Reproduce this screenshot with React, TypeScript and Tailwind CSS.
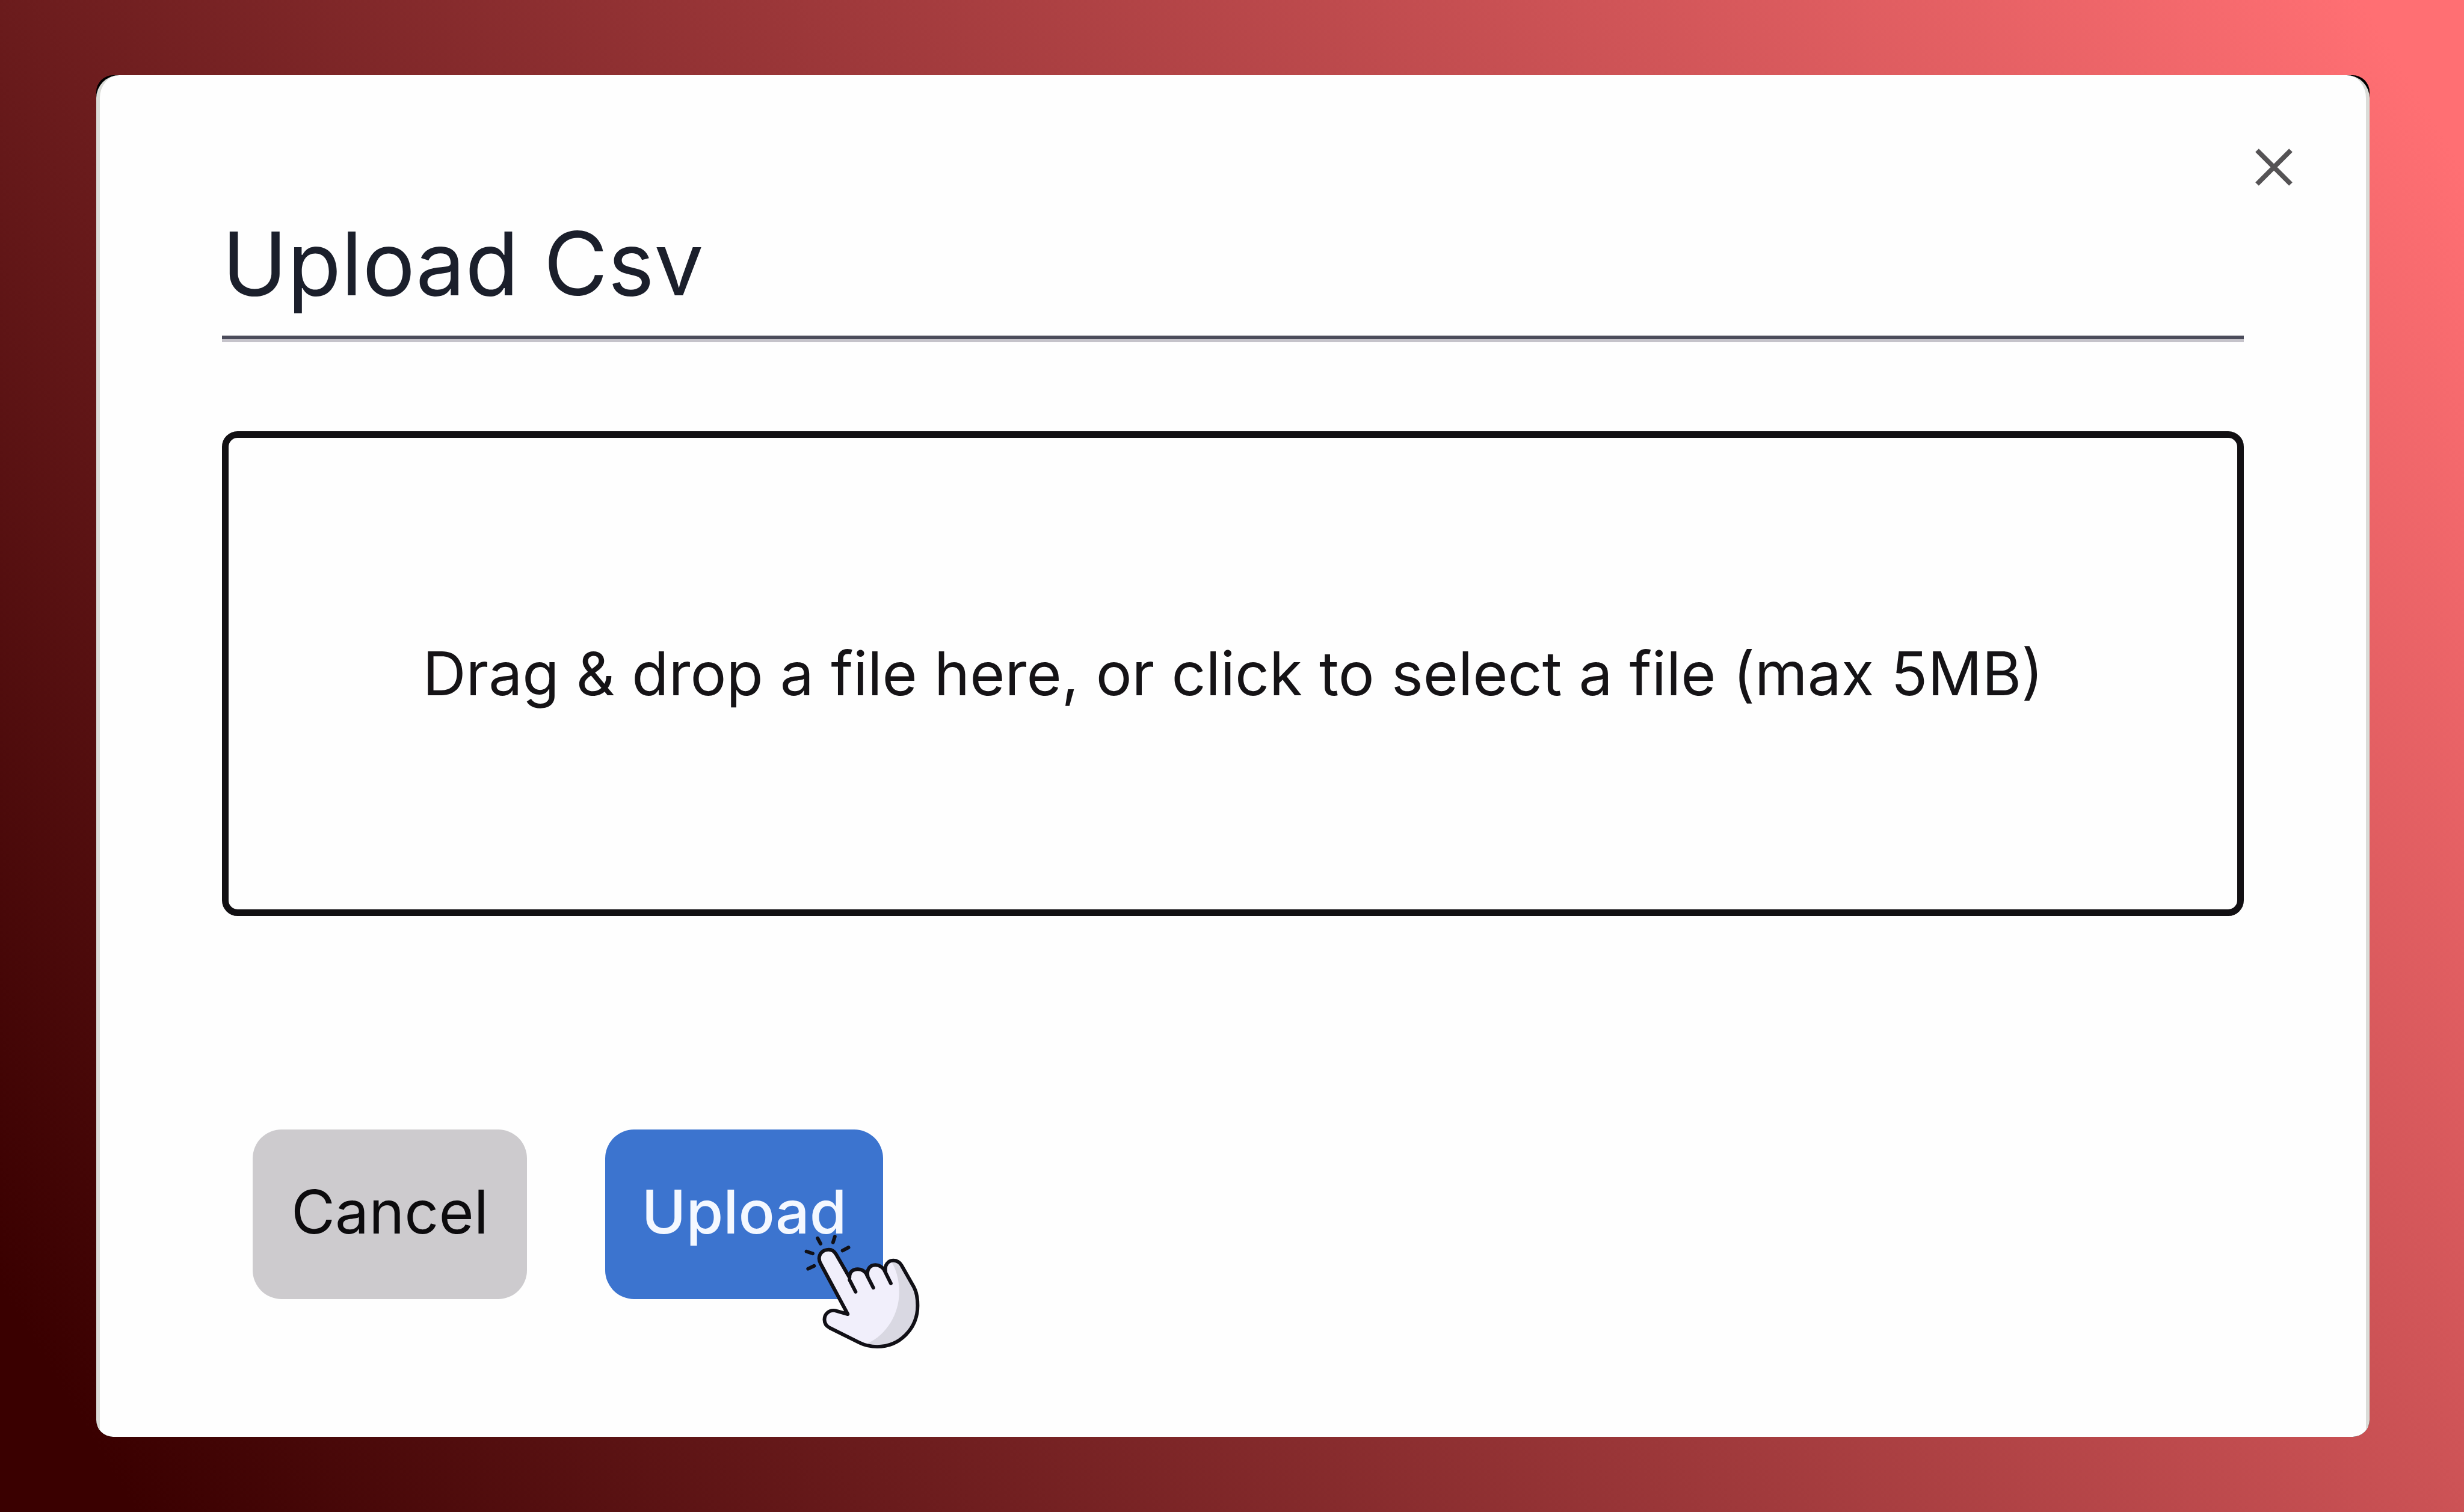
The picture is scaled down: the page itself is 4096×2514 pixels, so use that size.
import React from "react";

const RAYS = [
  "M215 161L235 198",
  "M331 150L319 189",
  "M423 223L383 244",
  "M140 250L182 264",
  "M192 347L151 367",
];

const OUTLINE =
  "M418 672L234 330C214 290 232 256 262 243C298 230 324 242 340 270L430 426C428 386 454 369 486 369C520 369 538 388 552 412C544 374 566 341 604 341C638 341 656 360 672 384C664 344 688 311 724 311C752 311 768 324 780 344L864 492C884 530 888 570 888 614C888 770 766 891 616 891C570 891 532 882 496 864L296 764C274 752 261 734 261 708C261 672 290 647 322 647C330 647 338 649 344 651Z";

function HandPointer() {
  return (
    <svg viewBox="0 0 1020 1020" className="block size-full" aria-hidden="true">
      <path d={OUTLINE} fill="#f1effb" />
      <path
        d="M708 314C752 306 770 324 780 344L864 492C884 530 888 570 888 614C888 770 766 891 616 891C592 891 570 888 552 868C680 810 764 670 764 524C764 440 744 370 708 314Z"
        fill="#d9d8e2"
      />
      <g fill="none" stroke="#111016" strokeWidth="24" strokeLinecap="round" strokeLinejoin="round">
        <path d={OUTLINE} />
        <path d="M430 442L471 522" />
        <path d="M546 408L590 494" />
        <path d="M664 376L708 465" />
        {RAYS.map((d) => (
          <path key={d} d={d} />
        ))}
      </g>
    </svg>
  );
}

export default function App() {
  return (
    <main className="min-h-screen bg-[linear-gradient(59deg,#3a0000_4%,#ff6f73_97%)] pt-[125px] pr-[157px] pb-[125px] pl-[160px] font-['Inter',sans-serif]">
      <section
        role="dialog"
        aria-labelledby="title"
        className="relative overflow-hidden rounded-[28px] bg-black"
      >
        <div className="min-h-[2264px] rounded-t-[38px] border-x-[6px] border-[#dbdcd8] bg-[#fefefe] px-[203px] pt-[220px]">
          <button
            type="button"
            aria-label="Close"
            className="absolute top-[122px] right-[128px] flex size-[62px] items-center justify-center"
          >
            <svg viewBox="0 0 62 62" className="size-full" fill="none" stroke="#555355" strokeWidth="8">
              <path d="M3 3L59 59M59 3L3 59" />
            </svg>
          </button>
          <h1
            id="title"
            className="border-b-[6px] border-[#4b4c5b] pb-[27px] text-[146px] leading-[186px] text-[#1b1f2b] shadow-[0_5px_0_#c5c3ca]"
          >
            Upload Csv
          </h1>
          <button
            type="button"
            className="mt-[153px] flex h-[806px] w-full items-center justify-center rounded-[26px] border-[11px] border-[#121013] text-[100px] leading-[128px] text-[#151316]"
          >
            Drag &amp; drop a file here, or click to select a file (max 5MB)
          </button>
          <div className="mt-[355px] flex gap-[130px] pl-[51px]">
            <button
              type="button"
              className="h-[282px] w-[456px] rounded-[48px] bg-[#cdcbce] pb-[8px] text-[100px] leading-[128px] text-[#0c0b0d]"
            >
              Cancel
            </button>
            <div className="relative">
              <button
                type="button"
                className="h-[282px] w-[462px] rounded-[48px] bg-[#3c74cf] pb-[8px] text-[100px] leading-[128px] font-medium text-[#f4f8ff]"
              >
                Upload
              </button>
              <div className="pointer-events-none absolute top-[141px] left-[300px] size-[252px]">
                <HandPointer />
              </div>
            </div>
          </div>
        </div>
      </section>
    </main>
  );
}
